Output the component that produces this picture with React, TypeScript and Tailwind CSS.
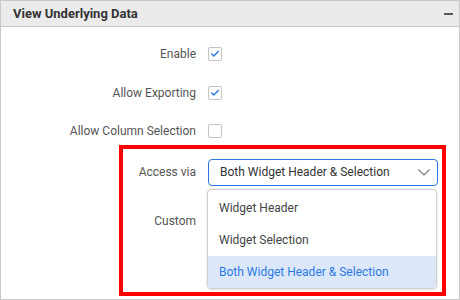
import { Check } from "lucide-react";

const font = { fontFamily: "Roboto, 'Noto Sans', sans-serif" };

function Box({ checked }: { checked?: boolean }) {
  return (
    <span className="flex h-[14px] w-[14px] items-center justify-center rounded-[2px] border border-[#c4c4c4] bg-white">
      {checked && <Check className="h-[10px] w-[10px] text-[#2a7ae2]" strokeWidth={3.5} />}
    </span>
  );
}

function Row({ label, h, children }: { label: string; h: string; children?: React.ReactNode }) {
  return (
    <div className={`flex items-center ${h}`}>
      <div className="w-[195px] text-right text-[12px] text-[#555]">{label}</div>
      <div className="ml-[12px] flex items-center">{children}</div>
    </div>
  );
}

export default function App() {
  const options = ["Widget Header", "Widget Selection", "Both Widget Header & Selection"];
  const selected = 2;

  return (
    <div className="relative h-[300px] w-[460px] overflow-hidden bg-white" style={font}>
      <div className="h-[300px] w-[460px] border border-[#c8c8c8]">
        <div className="flex h-[26px] items-center justify-between border-b border-[#c8c8c8] bg-[#ebebeb] pl-[12px] pr-[6px]">
          <span className="text-[13px] font-bold text-[#333]">View Underlying Data</span>
          <span className="h-[2px] w-[9px] bg-[#555]" />
        </div>

        <div className="flex flex-col pt-[7px]">
          <Row label="Enable" h="h-[39px]">
            <Box checked />
          </Row>
          <Row label="Allow Exporting" h="h-[39px]">
            <Box checked />
          </Row>
          <Row label="Allow Column Selection" h="h-[38px]">
            <Box />
          </Row>
          <Row label="Access via" h="h-[44px]">
            <div className="flex h-[27px] w-[230px] items-center justify-between rounded-[4px] border border-[#2a7ae2] pl-[11px] pr-[7px] text-[12px] text-[#333]">
              <span>{options[selected]}</span>
              <svg width="12" height="7" viewBox="0 0 12 7" fill="none">
                <polyline points="0.5,0.5 6,6 11.5,0.5" stroke="#777" strokeWidth="1.1" />
              </svg>
            </div>
          </Row>
          <Row label="Custom" h="h-[54px]" />
        </div>
      </div>

      {/* dropdown popup */}
      <div className="absolute left-[207px] top-[189px] w-[230px] rounded-[4px] border border-[#cfcfcf] bg-white pt-[2px] shadow-[0_1px_3px_rgba(0,0,0,0.12)]">
        {options.map((o, i) => (
          <div
            key={o}
            className={`flex h-[32px] items-center pl-[11px] text-[12px] ${
              i === selected ? "rounded-b-[3px] bg-[#dce8fa] text-[#2a7ae2]" : "text-[#444]"
            }`}
          >
            {o}
          </div>
        ))}
      </div>

      {/* annotation highlight */}
      <div className="pointer-events-none absolute left-[119px] top-[145px] h-[151px] w-[327px] border-[4px] border-[#ff0000]" />
    </div>
  );
}
